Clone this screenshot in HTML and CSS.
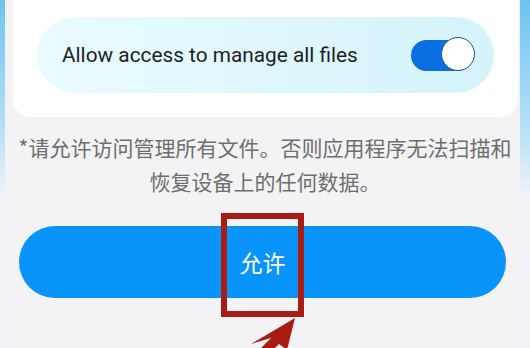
FILE: index.html
```html
<!DOCTYPE html>
<html lang="zh-CN">
<head>
  <meta charset="UTF-8">
  <title>文件访问权限</title>
  <link rel="stylesheet" href="styles.css">
</head>
<body>
  <div class="screen">
    <!-- 权限卡片 -->
    <div class="card">
      <div class="option">
        <span class="option-label">Allow access to manage all files</span>
        <span class="toggle on"><span class="thumb"></span></span>
      </div>
    </div>

    <p class="note">*请允许访问管理所有文件。否则应用程序无法扫描和<br>恢复设备上的任何数据。</p>

    <button class="allow-btn">允许</button>

    <!-- 标注 -->
    <div class="mark-box"></div>
    <svg class="mark-arrow" width="90" height="60" viewBox="0 0 90 60">
      <polygon points="66,0 58,32 50,26 14,60 2,60 42,20 22,26" fill="#a91c14"/>
    </svg>
  </div>
</body>
</html>
```

FILE: styles.css
```css
body {
  margin: 0;
  font-family: Roboto, "Noto Sans CJK SC", sans-serif;
  background: #f3f3f6;
}
.screen {
  position: relative;
  width: 530px;
  height: 348px;
  overflow: hidden;
  background:
    linear-gradient(to bottom, #6cc3f0, #bfe3f7 140px, #f0f3f7 195px) left top / 5px 100% no-repeat,
    linear-gradient(to bottom, #6cc3f0, #bfe3f7 140px, #f0f3f7 195px) right top / 10px 100% no-repeat,
    #f3f3f6;
}
.card {
  margin: 0 12px 0 13px;
  padding: 17px 24px 24px;
  background: #fff;
  border-radius: 0 0 18px 18px;
}
.option {
  display: flex;
  align-items: center;
  justify-content: space-between;
  height: 76px;
  padding: 0 21px 0 25px;
  border-radius: 38px;
  background: linear-gradient(to right, #e9fbfd, #d4f3fb);
}
.option-label {
  font-size: 20.8px;
  color: #1f1f1f;
}
.toggle {
  position: relative;
  width: 62px;
  height: 31px;
  border-radius: 16px;
  background: #0a6fe3;
}
.thumb {
  position: absolute;
  right: -2px;
  top: -3px;
  width: 34px;
  height: 34px;
  box-sizing: border-box;
  border-radius: 50%;
  background: #fff;
  border: 1.5px solid #24508f;
}
.note {
  margin: 13px 0 0;
  padding: 0 6px;
  text-align: center;
  font-family: "Noto Sans CJK SC", sans-serif;
  font-size: 21px;
  line-height: 34px;
  color: #6e6e6e;
}
.allow-btn {
  display: block;
  width: 487px;
  height: 72px;
  margin: 28px 0 0 19px;
  border: none;
  border-radius: 36px;
  background: #0894fb;
  color: #fff;
  font-family: "Noto Sans CJK SC", sans-serif;
  font-size: 23px;
}
.mark-box {
  position: absolute;
  left: 221px;
  top: 213px;
  width: 71px;
  height: 92px;
  border: 6px solid #a91c14;
}
.mark-arrow {
  position: absolute;
  left: 229px;
  top: 318px;
}
```
